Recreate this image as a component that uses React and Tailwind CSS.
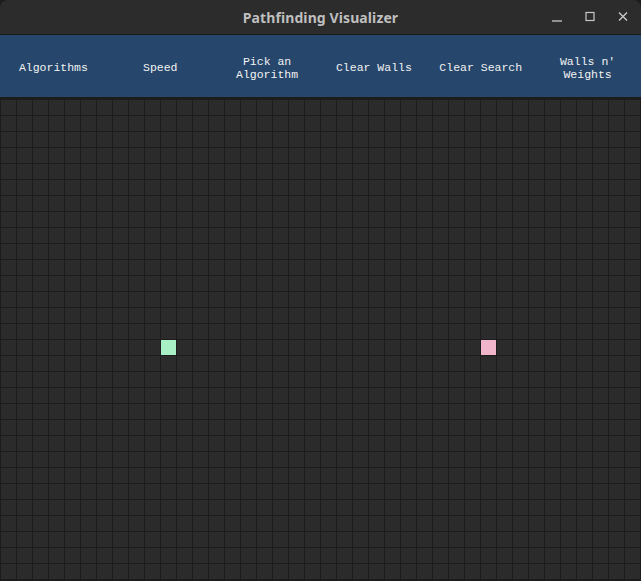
const COLS = 40;
const ROWS = 30;
const START = { row: 15, col: 10 };
const END = { row: 15, col: 30 };

const menuItems = ['Algorithms', 'Speed', 'Pick an Algorithm', 'Clear Walls', 'Clear Search', "Walls n' Weights"];

function TitleBar() {
  return (
    <div className="relative h-[35px] bg-[#2c2c2c] border-b border-[#1b1b1b] flex items-center justify-center rounded-t-[8px]">
      <span className="text-[14px] font-bold text-[#bfbfbf] font-['Noto_Sans',sans-serif] tracking-[0.1px]">
        Pathfinding Visualizer
      </span>
      <div className="absolute right-[2px] top-0 h-full flex items-center">
        {/* minimize */}
        <div className="w-[33px] h-full flex items-center justify-center">
          <svg width="12" height="12" viewBox="0 0 12 12">
            <path d="M1 10h10" stroke="#c8c8c8" strokeWidth="1.3" />
          </svg>
        </div>
        {/* maximize */}
        <div className="w-[33px] h-full flex items-center justify-center">
          <svg width="12" height="12" viewBox="0 0 12 12">
            <rect x="2" y="1.5" width="8" height="8" fill="none" stroke="#c8c8c8" strokeWidth="1.2" />
          </svg>
        </div>
        {/* close */}
        <div className="w-[33px] h-full flex items-center justify-center">
          <svg width="12" height="12" viewBox="0 0 12 12">
            <path d="M2 1.5l8 8M10 1.5l-8 8" stroke="#c8c8c8" strokeWidth="1.4" />
          </svg>
        </div>
      </div>
    </div>
  );
}

function MenuBar() {
  return (
    <div className="h-[62px] bg-[#26466b] grid grid-cols-6 items-center pt-[3px]">
      {menuItems.map(item => (
        <div
          key={item}
          className="text-center text-[#f2f2f2] text-[11.5px] leading-[13px] font-['Liberation_Mono',monospace] px-[6px]"
        >
          {item}
        </div>
      ))}
    </div>
  );
}

function Grid() {
  const cells = [];
  for (let r = 0; r < ROWS; r++) {
    for (let c = 0; c < COLS; c++) {
      let color = 'bg-[#2b2b2b]';
      if (r === START.row && c === START.col) color = 'bg-[#a9efc5]';
      if (r === END.row && c === END.col) color = 'bg-[#f0b4cb]';
      cells.push(<div key={r + '-' + c} className={`w-[15px] h-[15px] ${color}`} />);
    }
  }
  return (
    <div className="bg-[#1c1c1c] pt-[3px] pl-px">
      <div className="grid grid-cols-[repeat(40,15px)] auto-rows-[15px] gap-px">
        {cells}
      </div>
    </div>
  );
}

export default function App() {
  return (
    <div className="w-[641px] h-[581px] overflow-hidden bg-[#1c1c1c]">
      <TitleBar />
      <MenuBar />
      <Grid />
    </div>
  );
}
